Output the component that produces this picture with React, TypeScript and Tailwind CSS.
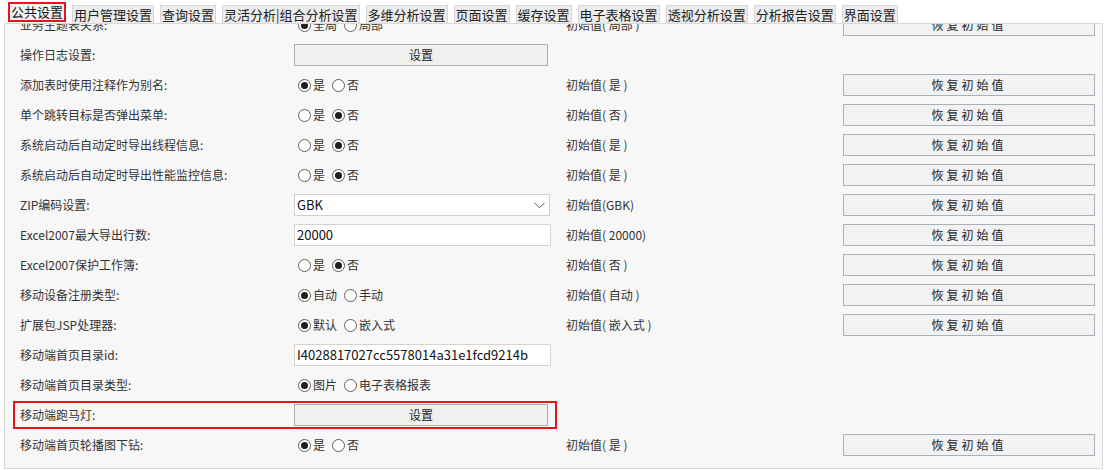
import React from "react";

const tabs = [
  "公共设置",
  "用户管理设置",
  "查询设置",
  "灵活分析|组合分析设置",
  "多维分析设置",
  "页面设置",
  "缓存设置",
  "电子表格设置",
  "透视分析设置",
  "分析报告设置",
  "界面设置",
];

type Control =
  | { kind: "radio"; options: string[]; checked: number }
  | { kind: "button" }
  | { kind: "select"; value: string }
  | { kind: "input"; value: string };

interface Row {
  label: string;
  control: Control;
  initial?: string;
  highlight?: boolean;
}

const rows: Row[] = [
  { label: "业务主题表关系:", control: { kind: "radio", options: ["全局", "局部"], checked: 0 }, initial: "初始值( 局部 )" },
  { label: "操作日志设置:", control: { kind: "button" } },
  { label: "添加表时使用注释作为别名:", control: { kind: "radio", options: ["是", "否"], checked: 0 }, initial: "初始值( 是 )" },
  { label: "单个跳转目标是否弹出菜单:", control: { kind: "radio", options: ["是", "否"], checked: 1 }, initial: "初始值( 否 )" },
  { label: "系统启动后自动定时导出线程信息:", control: { kind: "radio", options: ["是", "否"], checked: 1 }, initial: "初始值( 是 )" },
  { label: "系统启动后自动定时导出性能监控信息:", control: { kind: "radio", options: ["是", "否"], checked: 1 }, initial: "初始值( 是 )" },
  { label: "ZIP编码设置:", control: { kind: "select", value: "GBK" }, initial: "初始值(GBK)" },
  { label: "Excel2007最大导出行数:", control: { kind: "input", value: "20000" }, initial: "初始值( 20000)" },
  { label: "Excel2007保护工作簿:", control: { kind: "radio", options: ["是", "否"], checked: 1 }, initial: "初始值( 否 )" },
  { label: "移动设备注册类型:", control: { kind: "radio", options: ["自动", "手动"], checked: 0 }, initial: "初始值( 自动 )" },
  { label: "扩展包JSP处理器:", control: { kind: "radio", options: ["默认", "嵌入式"], checked: 0 }, initial: "初始值( 嵌入式 )" },
  { label: "移动端首页目录id:", control: { kind: "input", value: "I4028817027cc5578014a31e1fcd9214b" } },
  { label: "移动端首页目录类型:", control: { kind: "radio", options: ["图片", "电子表格报表"], checked: 0 } },
  { label: "移动端跑马灯:", control: { kind: "button" }, highlight: true },
  { label: "移动端首页轮播图下钻:", control: { kind: "radio", options: ["是", "否"], checked: 0 }, initial: "初始值( 是 )" },
];

function RadioDot({ on }: { on: boolean }) {
  return (
    <span className="flex h-[13px] w-[13px] shrink-0 items-center justify-center rounded-full border border-[#5f5f5f] bg-white">
      {on && <span className="h-[7px] w-[7px] rounded-full bg-[#1f1f1f]" />}
    </span>
  );
}

function ControlCell({ control, width }: { control: Control; width: string }) {
  if (control.kind === "radio") {
    return (
      <div className={`flex items-center pl-[4px] ${width}`}>
        {control.options.map((opt, i) => (
          <span key={opt} className="mr-[7px] flex items-center">
            <RadioDot on={i === control.checked} />
            <span className="ml-[2px]">{opt}</span>
          </span>
        ))}
      </div>
    );
  }
  if (control.kind === "button") {
    return (
      <div className={width}>
        <button className="h-[22px] w-[254px] border border-[#a7b1bd] bg-[#f0f0f0] text-[12px] text-[#222]">设置</button>
      </div>
    );
  }
  if (control.kind === "select") {
    return (
      <div className={width}>
        <div className="flex h-[22px] w-[256px] items-center justify-between border border-[#cfcfcf] bg-white pl-[2px] pr-[4px] text-[13px] text-[#111]">
          <span>{control.value}</span>
          <svg width="11" height="7" viewBox="0 0 11 7" fill="none">
            <path d="M0.5 0.8 L5.5 5.8 L10.5 0.8" stroke="#555" strokeWidth="1" />
          </svg>
        </div>
      </div>
    );
  }
  return (
    <div className={width}>
      <div className="flex h-[22px] w-[257px] items-center border border-[#d6d3cf] bg-white pl-[2px] text-[13px] text-[#111]">
        {control.value}
      </div>
    </div>
  );
}

function SettingRow({ row }: { row: Row }) {
  if (row.highlight) {
    return (
      <div className="flex h-[30px] items-center pl-[8px]">
        <div className="flex h-[28px] w-[544px] items-center border-2 border-[#e8141c] pl-[5px]">
          <div className="w-[274px] shrink-0">{row.label}</div>
          <ControlCell control={row.control} width="w-[254px]" />
        </div>
      </div>
    );
  }
  return (
    <div className="flex h-[30px] items-center pl-[15px]">
      <div className="w-[274px] shrink-0">{row.label}</div>
      <ControlCell control={row.control} width="w-[272px] shrink-0" />
      <div className="w-[277px] shrink-0">{row.initial ?? ""}</div>
      {row.initial && (
        <button className="h-[22px] w-[252px] shrink-0 border border-[#a7b1bd] bg-[#f2f2f2] text-[12px] tracking-[3px] text-[#222]">
          恢复初始值
        </button>
      )}
    </div>
  );
}

export default function App() {
  return (
    <div
      className="h-[470px] w-[1107px] overflow-hidden bg-white text-[12px] text-[#333]"
      style={{ fontFamily: '"Noto Sans CJK SC", "Noto Sans", sans-serif' }}
    >
      {/* tab strip */}
      <div className="flex h-[23px] items-end gap-[6px] pl-[8px]">
        {tabs.map((t, i) =>
          i === 0 ? (
            <div key={t} className="mb-[1px] flex h-[20px] items-center border-2 border-[#e8141c] bg-[#f2f2f2] px-[1px] text-[13px] leading-[14px] text-[#111]">
              {t}
            </div>
          ) : (
            <div key={t} className="flex h-[18px] items-center border border-b-0 border-[#d6d6d6] bg-[#ececec] px-[1px] text-[13px] leading-[14px] text-[#222]">
              {t}
            </div>
          )
        )}
      </div>

      {/* settings panel, scrolled slightly */}
      <div className="mx-[4px] h-[446px] overflow-hidden border border-[#d9d9d9] bg-[#f7f7f7]">
        <div className="-mt-[14px]">
          {rows.map((r) => (
            <SettingRow key={r.label} row={r} />
          ))}
        </div>
      </div>
    </div>
  );
}
